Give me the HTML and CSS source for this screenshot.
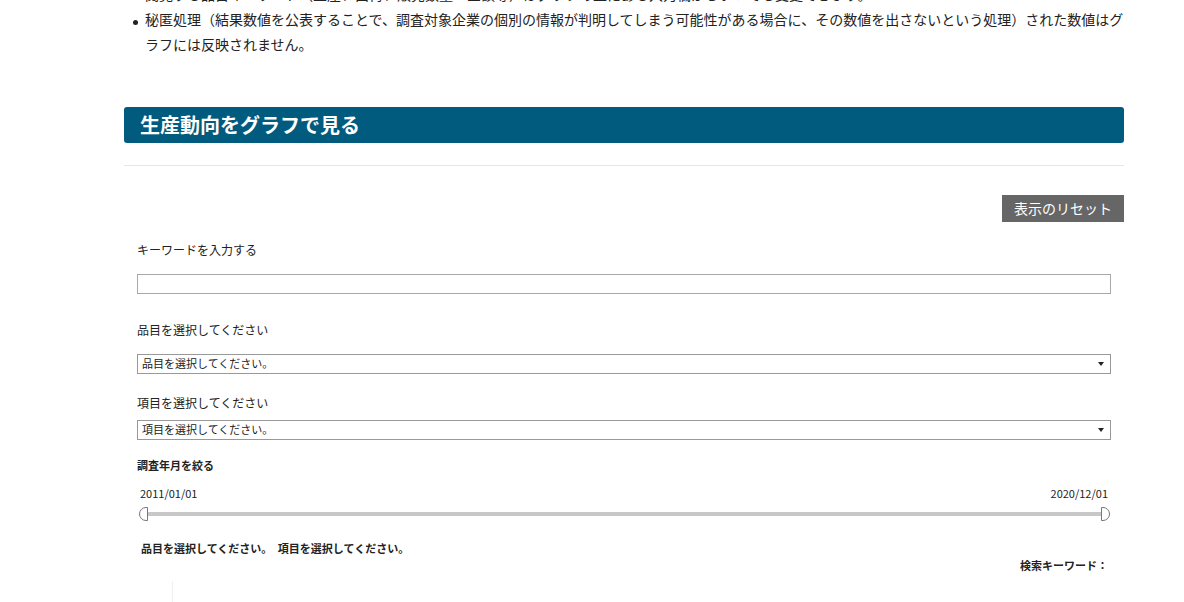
FILE: index.html
```html
<!DOCTYPE html>
<html lang="ja">
<head>
  <meta charset="UTF-8" />
  <meta name="viewport" content="width=device-width, initial-scale=1.0" />
  <title>生産動向をグラフで見る</title>
  <link rel="stylesheet" href="styles.css">
</head>
<body>
<div class="wrap">
  <ul class="notes">
    <li>閲覧する品目キーワード（生産、出荷、販売数量・金額等）はグラフの上にある入力欄からいつでも変更できます。</li>
    <li>秘匿処理（結果数値を公表することで、調査対象企業の個別の情報が判明してしまう可能性がある場合に、その数値を出さないという処理）された数値はグラフには反映されません。</li>
  </ul>

  <h2 class="section-title">生産動向をグラフで見る</h2>
  <hr class="rule">

  <div class="tools">
    <button class="reset">表示のリセット</button>
  </div>

  <div class="form">
    <label class="label first">キーワードを入力する</label>
    <input class="text-input" type="text">

    <label class="label">品目を選択してください</label>
    <div class="select item">品目を選択してください。<span class="arrow"></span></div>

    <label class="label">項目を選択してください</label>
    <div class="select field">項目を選択してください。<span class="arrow"></span></div>

    <div class="range-title">調査年月を絞る</div>
    <div class="range-dates"><span>2011/01/01</span><span>2020/12/01</span></div>
    <div class="range">
      <span class="handle left"></span>
      <span class="track"></span>
      <span class="handle right"></span>
    </div>

    <div class="selected">品目を選択してください。　項目を選択してください。</div>
    <div class="search-kw">検索キーワード：</div>
    <div class="chart-area"></div>
  </div>
</div>
</body>
</html>
```

FILE: styles.css
```css
body { margin: 0; font-family: "Noto Sans CJK JP", "Noto Sans", sans-serif; color: #222; background: #fff; }
.wrap { width: 1000px; margin: -18px 0 0 124px; }
.notes { margin: 0; padding: 0 0 0 8px; list-style: none; font-size: 14px; line-height: 25px; }
.notes li { position: relative; padding-left: 13px; }
.notes li::before { content: ""; position: absolute; left: 1px; top: 13px; width: 5px; height: 5px; border-radius: 50%; background: #222; }
.section-title { margin: 50px 0 0; height: 36px; line-height: 36px; padding: 0 16px; background: #005b7e; color: #fff; font-size: 20px; font-weight: bold; border-radius: 3px; }
.rule { margin: 22px 0 0; border: none; border-top: 1px solid #e6e6e6; }
.tools { display: flex; justify-content: flex-end; margin-top: 29px; }
.reset { background: #666; color: #fff; border: none; height: 27px; padding: 0 12px 2px; font-family: inherit; font-size: 14px; cursor: pointer; }
.form { padding: 0 13px; display: flex; flex-direction: column; font-size: 12px; }
.label { margin-top: 19px; line-height: 20px; }
.label.first { margin-top: 18px; }
.text-input { margin-top: 14px; height: 20px; box-sizing: border-box; border: 1px solid #a9a9a9; padding: 0 4px; }
.text-input + .label { margin-top: 26px; }
.select { position: relative; height: 20px; box-sizing: border-box; border: 1px solid #999; font-size: 11px; line-height: 17px; padding: 0 4px; }
.select.item { margin-top: 14px; }
.select.field { margin-top: 7px; }
.arrow { position: absolute; right: 6px; top: 7px; border-left: 3.5px solid transparent; border-right: 3.5px solid transparent; border-top: 4px solid #222; }
.range-title { margin-top: 17px; font-size: 11px; font-weight: bold; line-height: 16px; }
.range-dates { display: flex; justify-content: space-between; margin-top: 13px; padding: 0 3px; font-size: 11px; line-height: 15px; }
.range { display: flex; align-items: center; margin-top: 6px; padding: 0 1px 0 2px; height: 14px; }
.track { flex: 1; height: 4px; background: #c8c8c8; }
.handle { width: 9px; height: 14px; box-sizing: border-box; border: 1px solid #777; background: #fff; }
.handle.left { border-radius: 7px 0 0 7px; }
.handle.right { border-radius: 0 7px 7px 0; }
.selected { margin-top: 19px; padding-left: 4px; font-size: 11px; font-weight: bold; line-height: 16px; }
.search-kw { margin-top: 1px; text-align: right; padding-right: 3px; font-size: 11px; font-weight: bold; line-height: 16px; }
.chart-area { margin: 8px 0 0 35px; height: 40px; border-left: 1px solid #f0f0f0; }
```
